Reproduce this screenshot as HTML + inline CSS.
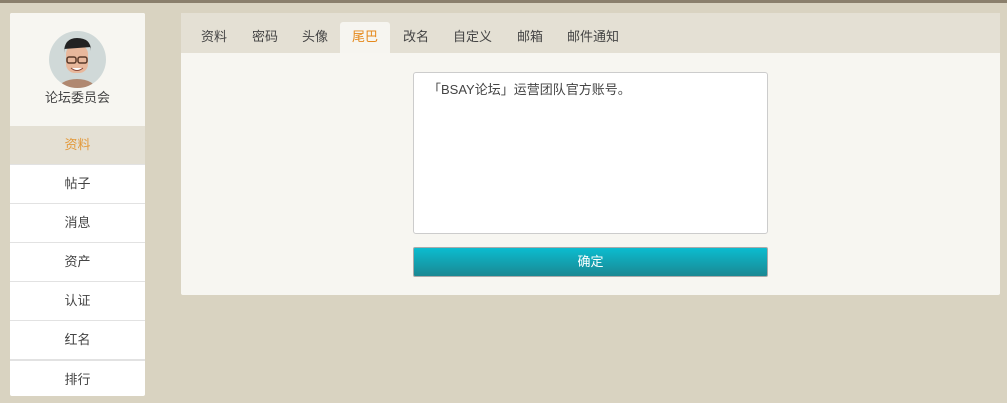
<!DOCTYPE html>
<html><head><meta charset="utf-8"><style>
*{margin:0;padding:0;box-sizing:border-box}
body{width:1007px;height:403px;background:#d9d3c1;font-family:"Liberation Sans","Noto Sans CJK SC",sans-serif;font-size:13px;color:#444;position:relative;overflow:hidden}
.top{position:absolute;left:0;top:0;width:1007px;height:3px;background:#8a7f6c}
.side{position:absolute;left:10px;top:13px;width:135px;height:383px;background:#fff;border-radius:2px;overflow:hidden}
.head{height:113px;background:#f7f6f1;text-align:center}
.av{position:absolute;left:39px;top:18px;width:57px;height:57px;border-radius:50%;background:#d0d9d8;overflow:hidden}
.name{position:absolute;left:0;width:135px;top:74px;text-align:center;color:#444}
.item{height:39px;line-height:38px;text-align:center;border-bottom:1px solid #e2e2e2;color:#444}
.item.on{background:#e4e0d4;color:#e39a3c}
.main{position:absolute;left:181px;top:13px;width:819px;height:282px;background:#f7f6f1;border-radius:2px}
.tabs{height:40px;background:#e4e0d4;position:relative}
.tab{position:absolute;top:9px;height:31px;line-height:30px;color:#444}
.tab.on{background:#f6f5f0;color:#e5891c;border-radius:3px 3px 0 0;width:50px;text-align:center}
.ta{position:absolute;left:232px;top:59px;width:355px;height:162px;background:#fff;border:1px solid #ccc;border-radius:3px;padding:6px 14px;color:#444}
.btn{position:absolute;left:232px;top:234px;width:355px;height:30px;border:1px solid #aaa;border-radius:2px;background:linear-gradient(#0bbccf,#1a8893);color:#fff;text-align:center;line-height:28px}
</style></head><body>
<div class="top"></div>
<div class="side">
<div class="head"></div>
<div class="av"><svg width="57" height="57" viewBox="0 0 57 57"><ellipse cx="28" cy="60" rx="20" ry="12" fill="#b08870"/><rect x="17" y="14" width="22" height="28" rx="9" fill="#e8b89c"/><path d="M15 22 Q15 7 28 7 Q42 7 42 20 L42 16 L15 18Z" fill="#222"/><rect x="18" y="26" width="9" height="6" rx="2" fill="none" stroke="#5a3a2a" stroke-width="1.5"/><rect x="29" y="26" width="9" height="6" rx="2" fill="none" stroke="#5a3a2a" stroke-width="1.5"/><path d="M22 37 Q28 42 34 37" fill="#fff" stroke="#8a4a3a"/></svg></div>
<div class="name">论坛委员会</div>
<div class="item on">资料</div>
<div class="item">帖子</div>
<div class="item">消息</div>
<div class="item">资产</div>
<div class="item">认证</div>
<div class="item" style="border-bottom:2px solid #e2e2e2;height:40px">红名</div>
<div class="item" style="border:0">排行</div>
</div>
<div class="main">
<div class="tabs">
<span class="tab" style="left:20px">资料</span>
<span class="tab" style="left:71px">密码</span>
<span class="tab" style="left:121px">头像</span>
<span class="tab on" style="left:159px">尾巴</span>
<span class="tab" style="left:222px">改名</span>
<span class="tab" style="left:272px">自定义</span>
<span class="tab" style="left:336px">邮箱</span>
<span class="tab" style="left:386px">邮件通知</span>
</div>
<div class="ta">「BSAY论坛」运营团队官方账号。</div>
<div class="btn">确定</div>
</div>
</body></html>
